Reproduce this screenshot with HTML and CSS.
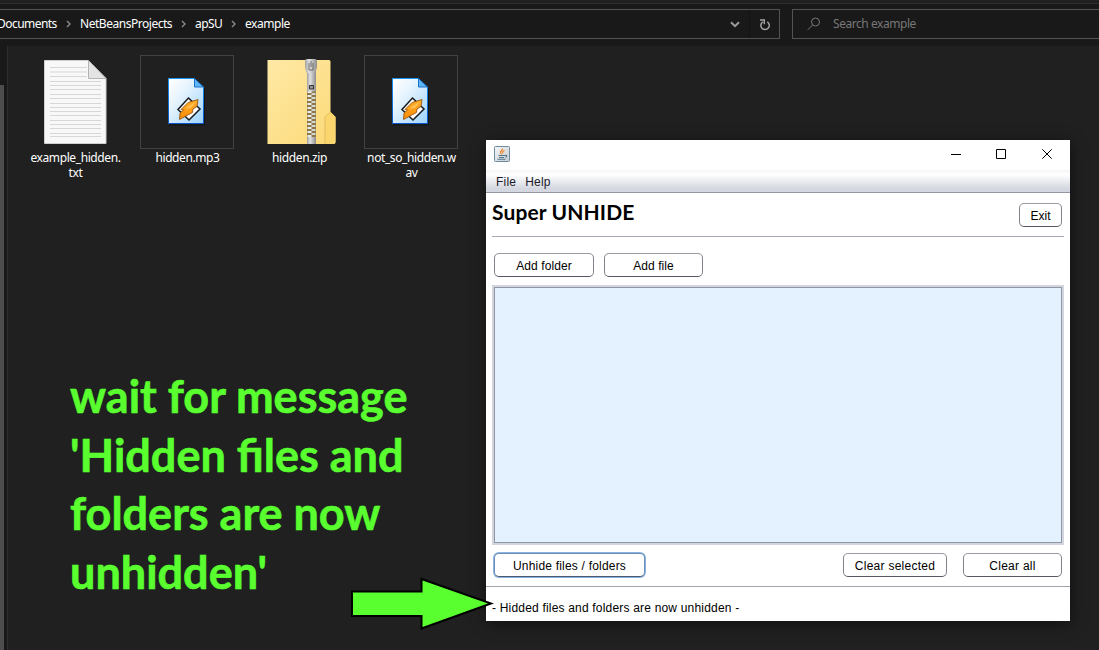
FILE: index.html
```html
<!DOCTYPE html>
<html lang="en">
<head>
<meta charset="utf-8">
<title>Super UNHIDE</title>
<link rel="stylesheet" href="styles.css">
</head>
<body>
<svg class="defs" width="0" height="0" aria-hidden="true">
  <defs>
    <linearGradient id="paper" x1="0" y1="0" x2="1" y2="1"><stop offset="0" stop-color="#fff"/><stop offset=".35" stop-color="#e7f4fe"/><stop offset="1" stop-color="#9dd3fb"/></linearGradient>
    <linearGradient id="edge" x1="0" y1="0" x2="0" y2="1"><stop offset="0" stop-color="#1694f6"/><stop offset="1" stop-color="#0755c9"/></linearGradient>
    <linearGradient id="bolt" x1="0" y1="0" x2="0" y2="1"><stop offset="0" stop-color="#ffb02a"/><stop offset="1" stop-color="#f88a08"/></linearGradient>
    <symbol id="media" viewBox="1 0 40 50">
      <path d="M3 48h35.500V11" fill="none" stroke="#0b0b0b" opacity=".6"/>
      <path d="M2.500 1.500h26l9 9v36h-35z" fill="url(#paper)" stroke="url(#edge)"/>
      <path d="M28.500 1.500v8.500h9z" fill="#62b5f3" stroke="#1672d0"/>
      <path d="M22.500 21L34 32 23 43 12 32.500z" fill="#fff" stroke="#15191d" stroke-width="1.500"/>
      <path d="M32 22.500l-1 7-4 2.500-.5 3.500L13.500 42.500l.5-6.500 3.500-3-2.500-.5 7-7z" fill="url(#bolt)" stroke="#8a4708" stroke-width=".8"/>
      <path d="M29.500 25l-8 4.500-2 2.500 6-1z" fill="#ffd06c" opacity=".6"/>
    </symbol>
  </defs>
</svg>
<div class="desktop">
  <header class="toolbar">
    <div class="address">
      <nav class="crumbs">
        <span class="crumb c-doc">Documents</span>
        <svg class="sep" viewBox="0 0 5 8"><path d="M1 1l3 3-3 3"/></svg>
        <span class="crumb c-net">NetBeansProjects</span>
        <svg class="sep" viewBox="0 0 5 8"><path d="M1 1l3 3-3 3"/></svg>
        <span class="crumb c-ap">apSU</span>
        <svg class="sep" viewBox="0 0 5 8"><path d="M1 1l3 3-3 3"/></svg>
        <span class="crumb c-ex">example</span>
      </nav>
      <svg class="chevron" width="10" height="7" viewBox="0 0 10 7"><path d="M1 1.200l4 4 4-4"/></svg>
      <div class="refresh"><svg width="12" height="13" viewBox="0 0 12 13"><path d="M8.300 3.800A4.200 4.200 0 1 1 3.700 3.900M1 2h4.300v4.200"/></svg></div>
    </div>
    <div class="search">
      <svg width="14" height="14" viewBox="0 0 14 14"><circle cx="8.500" cy="5" r="4"/><path d="M5.700 7.900L.8 12.800"/></svg>
      <span>Search example</span>
    </div>
  </header>
  <div class="body">
    <aside class="side"><div class="thumb"></div></aside>
    <main class="files">
      <div class="file">
        <div class="frame plain">
          <svg width="94" height="94" viewBox="0 0 94 94">
            <path d="M16.500 5.500H60l18 18v65H16.500z" fill="#f8f8f8" stroke="#cfcfcf"/>
            <path d="M60.500 5.500v18H78z" fill="#e4e4e4" stroke="#b3b3b3"/>
            <path d="M22 12.500h37M22 17h37M22 21.500h37" stroke="#d6d7d8"/>
            <path d="M22 26.500h51M22 30.500h51M22 34.500h51M22 39.500h51M22 43.500h51M22 48.500h51M22 52.500h51M22 56.500h51M22 60.500h51M22 65.500h51M22 69.500h51M22 73.500h51M22 78.500h51M22 81.500h51" stroke="#d6d7d8"/>
          </svg>
        </div>
        <div class="label">example_hidden.<br>txt</div>
      </div>
      <div class="file">
        <div class="frame"><svg width="40" height="50"><use href="#media"/></svg></div>
        <div class="label">hidden.mp3</div>
      </div>
      <div class="file">
        <div class="frame plain">
          <svg width="94" height="94" viewBox="0 0 94 94">
            <defs>
              <linearGradient id="folder" x1="0" y1="0" x2="1" y2="1"><stop offset="0" stop-color="#ffe9a6"/><stop offset="1" stop-color="#fbd976"/></linearGradient>
              <linearGradient id="metal"><stop offset="0" stop-color="#a0a0a0"/><stop offset=".35" stop-color="#e1e1e1"/><stop offset="1" stop-color="#8d8d8d"/></linearGradient>
            </defs>
            <path d="M15.500 5H77q1.500 0 1.500 1.500V57l5 5v25q0 2-2 2h-66z" fill="url(#folder)"/>
            <path d="M78.500 57l5 5v25q0 2-2 2H73V62z" fill="#fbd66f"/>
            <path d="M73 89V62l5.500-5" fill="none" stroke="#e2bd5e"/>
            <path d="M55 36h9v47h-9z" fill="#8c7a48"/>
            <path d="M57.500 36v47" stroke="#ececec" stroke-width="4" stroke-dasharray="2 2"/>
            <path d="M61.500 38v45" stroke="#d5d5d5" stroke-width="4" stroke-dasharray="2 2"/>
            <path d="M55 17h9v19.500h-9zM55 82h9v7h-9z" fill="url(#metal)"/>
            <path d="M53 6q0-2 2-2h8q2 0 2 2v6l-1.500 6h-9L53 12z" fill="url(#metal)"/>
            <path d="M57 8v7h4V8M59 6v6" fill="none" stroke="#6a6a6a"/>
            <path d="M57.500 30.500h4v3.500h-4z" fill="#999" stroke="#333"/>
          </svg>
        </div>
        <div class="label">hidden.zip</div>
      </div>
      <div class="file">
        <div class="frame"><svg width="40" height="50"><use href="#media"/></svg></div>
        <div class="label">not_so_hidden.w<br>av</div>
      </div>
    </main>
  </div>

  <div class="note">
    <div>wait for message</div>
    <div>'Hidden files and</div>
    <div>folders are now</div>
    <div>unhidden'</div>
  </div>

  <section class="window">
    <div class="titlebar">
      <svg class="java" width="16" height="16" viewBox="0 0 16 16">
        <defs><linearGradient id="tile" x1="0" y1="0" x2="1" y2="1"><stop offset="0" stop-color="#f6f7f8"/><stop offset="1" stop-color="#c6ccd0"/></linearGradient></defs>
        <rect x=".5" y=".5" width="15" height="15" rx="1" fill="url(#tile)" stroke="#6d8ba1"/>
        <path d="M8.500 2.500c1 1.400-3 2.500-2 4.200.5 1 1 1 1 1.800M10.500 4.500c-2 1-2.500 1.500-1.500 3" fill="none" stroke="#ed8126" stroke-width="1.200"/>
        <path d="M4.500 9.500h6.500M5 11.500h5M3.500 13.300h8M11 9.500c2-.8 2.500 1.200.3 1.700" fill="none" stroke="#53758f" stroke-width="1.100"/>
      </svg>
      <svg class="controls" width="102" height="12" viewBox="0 0 102 12">
        <path d="M0 6.500h10M45.500 1.500h9v9h-9zM91.300 1.300l9.400 9.400M100.700 1.300l-9.400 9.400"/>
      </svg>
    </div>
    <div class="menubar"><span>File</span><span>Help</span></div>
    <div class="content">
      <div class="heading"><h1>Super UNHIDE</h1><button class="b-exit">Exit</button></div>
      <div class="row top"><button class="b-folder">Add folder</button><button class="b-file">Add file</button></div>
      <div class="list"></div>
      <div class="row bottom"><button class="b-unhide">Unhide files / folders</button><button class="b-sel">Clear selected</button><button class="b-all">Clear all</button></div>
    </div>
    <div class="status">- Hidded files and folders are now unhidden -</div>
  </section>

  <svg class="arrow" width="146" height="60" viewBox="0 0 146 60"><path d="M3 16.500h69.500V4L142 28.500 72.500 53.500V41H3z"/></svg>
</div>
</body>
</html>
```

FILE: styles.css
```css
* { box-sizing: border-box; }
body { margin: 0; overflow: hidden; background: #202020; font-family: "Noto Sans", "Open Sans", sans-serif; font-size: 12px; }
.defs { position: absolute; }
.desktop { position: relative; width: 1099px; height: 650px; overflow: hidden; display: flex; flex-direction: column; }

.toolbar { height: 46px; flex: none; display: flex; gap: 12px; padding-top: 5px; background: #191919; border-top: 3px solid #202020; box-shadow: inset 0 1px #2d2d2d; }
.address { width: 780px; height: 30px; margin-top: 1px; border: 1px solid #535353; border-left: 0; display: flex; align-items: center; color: #fff; }
.crumbs { display: flex; align-items: center; flex: 1; margin-left: -3px; }
.crumb { white-space: nowrap; flex: none; line-height: 16px; }
.c-doc { width: 60px; letter-spacing: -.55px; }
.c-net { width: 92px; letter-spacing: -.47px; }
.c-ap { width: 27px; letter-spacing: -.6px; }
.c-ex { width: 46px; letter-spacing: -.45px; }
.sep { width: 5px; height: 8px; margin: 0 9px; flex: none; fill: none; stroke: #8a8a8a; stroke-width: 1.4; }
.chevron { margin-right: 9px; fill: none; stroke: #9b9b9b; stroke-width: 2; }
.refresh { width: 30px; height: 28px; border-left: 1px solid #121212; display: flex; align-items: center; justify-content: center; fill: none; stroke: #a4a4a4; stroke-width: 1.5; }
.search { flex: 1; height: 30px; margin-top: 1px; border: 1px solid #535353; border-right: 0; display: flex; align-items: center; gap: 12px; padding-left: 14px; color: #777; }
.search svg { fill: none; stroke: #777; }
.search span { letter-spacing: -.45px; line-height: 16px; }

.body { flex: 1; display: flex; }
.side { width: 8px; background: #191919; border-right: 1px solid #2d2d2d; padding-top: 39px; }
.thumb { width: 4px; height: 565px; background: #4d4d4d; }
.files { display: flex; padding: 9px 0 0 12px; }
.file { width: 112px; display: flex; flex-direction: column; align-items: center; }
.frame { width: 94px; height: 94px; border: 1px solid #424242; display: flex; align-items: center; justify-content: center; margin-left: -2px; }
.frame.plain { border-color: transparent; }
.frame svg { flex: none; }
.label { color: #fff; text-align: center; line-height: 15px; margin: 1px 0 0 -1px; letter-spacing: -.4px; white-space: nowrap; }

.note { position: absolute; left: 70px; top: 367px; color: #59ff2f; font: bold 45px/58.500px Lato, sans-serif; white-space: nowrap; -webkit-text-stroke: .6px #59ff2f; }

.window { position: absolute; left: 486px; top: 140px; width: 584px; height: 481px; background: #fff; box-shadow: 1px 3px 14px rgba(0,0,0,.5); display: flex; flex-direction: column; font: 12px "Liberation Sans", Arial, sans-serif; color: #000; }
.titlebar { height: 30px; display: flex; justify-content: space-between; padding: 6px 17px 0 8px; }
.controls { margin-top: 2px; fill: none; stroke: #000; }
.menubar { height: 23px; padding: 5px 0 0 10px; display: flex; gap: 9px; border-bottom: 1px solid #9297a1; background: linear-gradient(#f5f5f5 0, #fff 20%, #d4d7df 85%, #d4d7df); letter-spacing: .2px; color: #1a1a2b; }
.content { display: flex; flex-direction: column; padding: 0 6px; }
.heading { height: 44px; display: flex; justify-content: space-between; padding: 10px 2px 0 0; border-bottom: 1px solid #a7a7b5; }
h1 { margin: -6px 0 0; font: bold 21px/29px Lato, sans-serif; letter-spacing: .12px; }
button { height: 24px; padding: 1px 0 0; border: 1px solid #80838a; border-top-color: #999ca2; border-bottom-color: #555862; border-radius: 5px; background: #fff; color: #000; font: 12px "Liberation Sans", Arial, sans-serif; white-space: nowrap; }
.b-exit { width: 43px; }
.row { display: flex; }
.top { padding: 16px 2px 8px; gap: 10px; }
.b-folder { width: 100px; letter-spacing: .1px; }
.b-file { width: 99px; letter-spacing: .05px; }
.list { height: 260px; border: 2px solid #d3d5de; background: #e4f2ff; box-shadow: inset 0 0 0 1px #8f97a5; }
.bottom { padding: 8px 2px 9px; }
.b-unhide { width: 151px; letter-spacing: .2px; box-shadow: 0 0 0 1px #8ab4df; border-color: #6b8fb8; border-bottom-color: #4a5a70; }
.b-sel { width: 104px; letter-spacing: .26px; margin-left: auto; margin-right: 16px; }
.b-all { width: 99px; letter-spacing: .26px; }
.status { flex: 1; border-top: 1px solid #a3a3ad; padding: 14px 6px 0; letter-spacing: .19px; white-space: nowrap; }

.arrow { position: absolute; left: 349px; top: 575px; fill: #59ff2f; stroke: #000; stroke-width: 2; }
```
